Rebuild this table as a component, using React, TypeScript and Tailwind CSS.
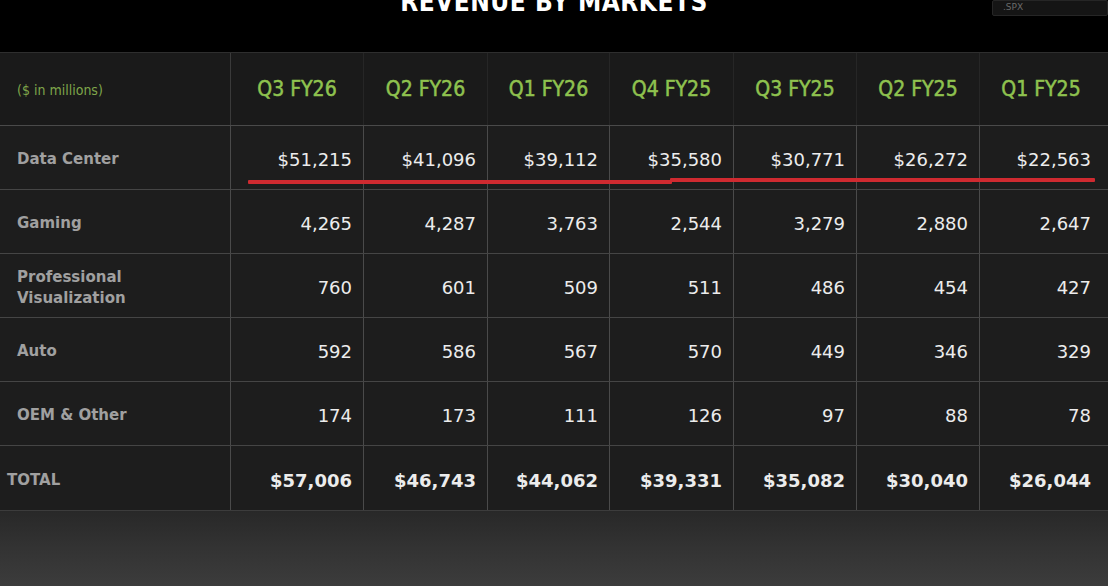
import React from "react";

const cols = ["Q3 FY26", "Q2 FY26", "Q1 FY26", "Q4 FY25", "Q3 FY25", "Q2 FY25", "Q1 FY25"];
const rows: { label: string[]; vals: string[]; total?: boolean }[] = [
  { label: ["Data Center"], vals: ["$51,215", "$41,096", "$39,112", "$35,580", "$30,771", "$26,272", "$22,563"] },
  { label: ["Gaming"], vals: ["4,265", "4,287", "3,763", "2,544", "3,279", "2,880", "2,647"] },
  { label: ["Professional", "Visualization"], vals: ["760", "601", "509", "511", "486", "454", "427"] },
  { label: ["Auto"], vals: ["592", "586", "567", "570", "449", "346", "329"] },
  { label: ["OEM & Other"], vals: ["174", "173", "111", "126", "97", "88", "78"] },
  { label: ["TOTAL"], vals: ["$57,006", "$46,743", "$44,062", "$39,331", "$35,082", "$30,040", "$26,044"], total: true },
];

const grid = "grid grid-cols-[230px_133px_124px_122px_124px_123px_123px_123px]";

export default function App() {
  return (
    <div className="relative w-[1108px] h-[586px] overflow-hidden bg-[#2a2a2a] flex flex-col" style={{ fontFamily: '"DejaVu Sans", sans-serif' }}>
      {/* top black band */}
      <div className="relative h-[52px] shrink-0 bg-black">
        <div className="absolute left-0 right-0 -top-[17px] text-center text-white font-bold text-[26px] tracking-[0.5px]" style={{ fontFamily: '"DejaVu Sans Condensed", "DejaVu Sans", sans-serif' }}>
          REVENUE BY MARKETS
        </div>
        <div className="absolute left-[992px] top-0 w-[116px] h-[16px] bg-[#151515] border border-[#262626] rounded-[2px] text-[9px] text-[#6a6a6a] pl-[10px] leading-[12px]">
          .SPX
        </div>
      </div>

      {/* table */}
      <div className="w-[1108px] shrink-0 bg-[#1d1d1d] border-t border-[#2e2e2e]">
        <div className={`${grid} h-[73px] bg-[#1a1a1a] border-b border-[#4a4a4a]`}>
          <div className="flex items-center pl-[17px] pt-[2px] text-[14px] text-[#7fa64a]" style={{ fontFamily: '"DejaVu Sans Condensed", sans-serif' }}>
            ($ in millions)
          </div>
          {cols.map((c, i) => (
            <div key={c} className={`flex items-center justify-center pt-[2px] text-[21px] font-normal text-[#8fc24f] [-webkit-text-stroke:0.5px_#8fc24f] border-l ${i === 0 ? "border-[#3a3a3a]" : "border-[#262626]"}`} style={{ fontFamily: '"DejaVu Sans Condensed", sans-serif' }}>
              {c}
            </div>
          ))}
        </div>
        {rows.map((r, ri) => (
          <div key={ri} className={`${grid} ${ri === 5 ? "h-[64px]" : "h-[64px] border-b border-[#454545]"}`}>
            <div className={`flex flex-col justify-center pt-[4px] ${r.total ? "pl-[7px]" : "pl-[17px]"} text-[15px] font-semibold text-[#a0a0a0] leading-[21px]`}>
              {r.label.map((l) => (
                <span key={l}>{l}</span>
              ))}
            </div>
            {r.vals.map((v, i) => (
              <div key={i} className={`flex items-center justify-end pt-[4px] pr-[11px] text-[18px] text-[#ececec] border-l border-[#4a4a4a] ${r.total ? "font-bold" : "font-medium"}`}>
                {v}
              </div>
            ))}
          </div>
        ))}
      </div>
      <div className="w-[1108px] h-px shrink-0 bg-[#3c3c3c]" />
      <div className="flex-1 bg-[linear-gradient(180deg,#282828_0%,#333333_50%,#3c3c3c_100%)]" />

      {/* red annotation line */}
      <div className="absolute left-[248px] top-[180px] w-[424px] h-[4px] bg-[#cf2a30] rounded-[1px]" />
      <div className="absolute left-[670px] top-[178px] w-[425px] h-[4px] bg-[#cf2a30] rounded-[1px]" />
    </div>
  );
}
